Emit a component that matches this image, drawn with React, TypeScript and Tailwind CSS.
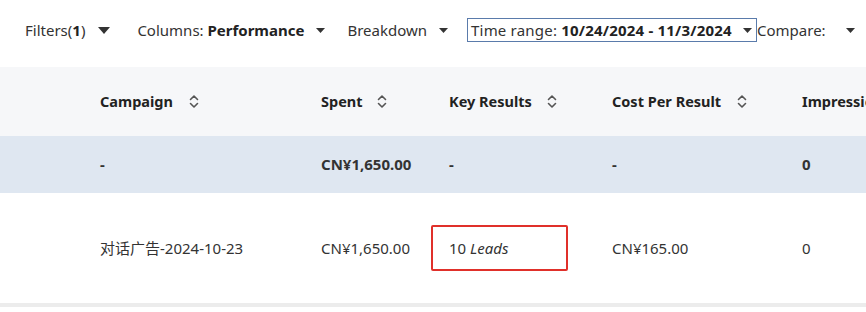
import { ReactNode } from "react";

const font = { fontFamily: '"Noto Sans", "Noto Sans CJK SC", sans-serif' };

function Caret({ size = "md" }: { size?: "md" | "sm" }) {
  return size === "md" ? (
    <svg width="12" height="7" viewBox="0 0 12 7" className="shrink-0">
      <path d="M0 0h12L6 7z" fill="#333" />
    </svg>
  ) : (
    <svg width="9" height="5" viewBox="0 0 9 5" className="shrink-0">
      <path d="M0 0h9L4.5 5z" fill="#333" />
    </svg>
  );
}

function SortIcon() {
  return (
    <svg width="10" height="15" viewBox="0 0 10 15" className="shrink-0">
      <path d="M1.5 5.5L5 2l3.5 3.5M1.5 9.5L5 13l3.5-3.5" fill="none" stroke="#555" strokeWidth="1.6" strokeLinecap="round" strokeLinejoin="round" />
    </svg>
  );
}

// column template shared by all rows
const cols = "grid grid-cols-[82px_221px_128px_163px_190px_200px]";

function Cell({ children, className = "" }: { children?: ReactNode; className?: string }) {
  return <div className={`pl-[18px] flex items-center whitespace-nowrap ${className}`}>{children}</div>;
}

export default function App() {
  return (
    <div className="w-[866px] h-[312px] overflow-hidden bg-white text-[15px] text-[#333]" style={font}>
      {/* toolbar */}
      <div className="h-[67px] flex items-center pl-[25px] pb-[7px]">
        <span>
          Filters(<b className="text-[#222]">1</b>)
        </span>
        <span className="ml-[13px]"><Caret /></span>
        <span className="ml-[27px]">
          Columns: <b className="text-[#222]">Performance</b>
        </span>
        <span className="ml-[12px]"><Caret size="sm" /></span>
        <span className="ml-[22px]">Breakdown</span>
        <span className="ml-[12px]"><Caret size="sm" /></span>
        <div className="ml-[19px] w-[290px] h-[24px] border border-[#5a7bab] flex items-center pl-[3px] pr-[4px]">
          <span className="tracking-[0.2px]">
            Time range: <b className="text-[#222]">10/24/2024 - 11/3/2024</b>
          </span>
          <span className="ml-auto"><Caret size="sm" /></span>
        </div>
        <span>Compare:</span>
        <span className="ml-[20px]"><Caret size="sm" /></span>
      </div>

      {/* header */}
      <div className={`${cols} h-[69px] bg-[#f6f7f9] font-bold text-[14.5px] text-[#222]`}>
        <Cell />
        <Cell>
          Campaign<span className="ml-[16px]"><SortIcon /></span>
        </Cell>
        <Cell>
          Spent<span className="ml-[14px]"><SortIcon /></span>
        </Cell>
        <Cell>
          Key Results<span className="ml-[15px]"><SortIcon /></span>
        </Cell>
        <Cell>
          Cost Per Result<span className="ml-[16px]"><SortIcon /></span>
        </Cell>
        <Cell>Impressions</Cell>
      </div>

      {/* total row */}
      <div className={`${cols} h-[57px] bg-[#dfe7f1] font-bold text-[#333]`}>
        <Cell />
        <Cell>-</Cell>
        <Cell>CN¥1,650.00</Cell>
        <Cell>-</Cell>
        <Cell>-</Cell>
        <Cell>0</Cell>
      </div>

      {/* campaign row */}
      <div className={`${cols} h-[114px] border-b-4 border-[#ececec] text-[#333]`}>
        <Cell />
        <Cell>对话广告-2024-10-23</Cell>
        <Cell>CN¥1,650.00</Cell>
        <div className="flex items-center">
          <div className="w-[137px] h-[46px] border-2 border-[#e0302a] rounded-[2px] flex items-center pl-[16px]">
            10&nbsp;<i>Leads</i>
          </div>
        </div>
        <Cell>CN¥165.00</Cell>
        <Cell>0</Cell>
      </div>
    </div>
  );
}
